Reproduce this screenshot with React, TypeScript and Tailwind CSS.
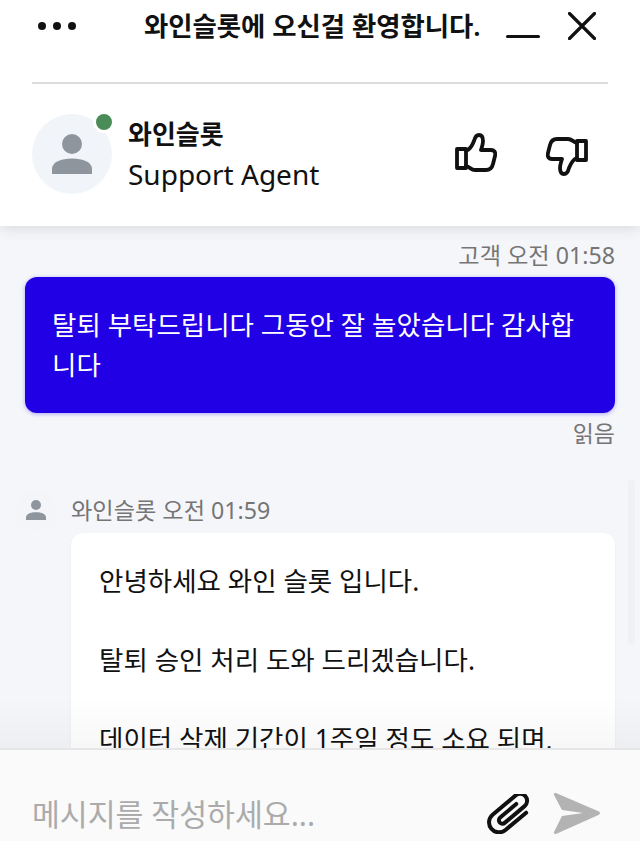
import React from "react";

function Person({ className }: { className: string }) {
  return (
    <svg viewBox="0 0 40 40" className={className} fill="#8e959c">
      <circle cx="20" cy="10" r="10" />
      <path d="M0 40V35C0 28 9 24.500 20 24.500S40 28 40 35V40Z" />
    </svg>
  );
}

function Thumb({ down }: { down?: boolean }) {
  return (
    <svg
      viewBox="0 0 42 40"
      className={down ? "w-[42px] h-[40px] rotate-180 mt-[3px]" : "w-[42px] h-[40px]"}
      fill="none"
      stroke="#111"
      strokeWidth="3.8"
      strokeLinejoin="round"
      strokeLinecap="round"
    >
      <path d="M2 16H11V35H2Z" />
      <path d="M11 18C14 17 17 13 19 8C20 4 21 2 24 2C27 2 28 5 28 8C28 11 27 14 26 17H36C39 17 41 19 40 23L38 31C37 35 35 37 31 37H20C16 37 15 34 11 33" />
    </svg>
  );
}

function Clip() {
  return (
    <svg viewBox="4 -6 44 40" className="w-[44px] h-[40px]" fill="none" stroke="#111" strokeWidth="4" strokeLinecap="round" strokeLinejoin="round">
      <path
        d="M38 11H17A3.500 3.500 0 0 0 17 18H43A7 7 0 0 0 43 4H13A10 10 0 0 0 13 24H40"
        transform="rotate(-40 26 14)"
      />
    </svg>
  );
}

function Send() {
  return (
    <svg viewBox="0 0 47 41" className="w-[47px] h-[41px]" fill="#b3b3b3">
      <path d="M1 2C0.500 0.500 2 -0.300 3.500 0.300L46 18.500C47.300 19.200 47.300 21 46 21.800L3.500 40.700C2 41.300 0.500 40.500 1 39L9 23L30 20L9 17Z" />
    </svg>
  );
}

export default function App() {
  return (
    <div
      className="relative flex flex-col h-[841px] w-[640px] overflow-hidden bg-[#f5f6fa] text-[#111]"
      style={{ fontFamily: '"Noto Sans", "Noto Sans CJK KR", sans-serif' }}
    >
      <header className="relative z-10 bg-white shadow-[0_2px_14px_rgba(0,0,0,0.12)] h-[226px] shrink-0 px-8">
        <div className="h-[84px] border-b-2 border-[#dcdcdc] flex items-start">
          <div className="flex gap-[7px] pt-[22px] w-[48px] pl-[6px]">
            <span className="w-[8px] h-[8px] rounded-full bg-[#111]" />
            <span className="w-[8px] h-[8px] rounded-full bg-[#111]" />
            <span className="w-[8px] h-[8px] rounded-full bg-[#111]" />
          </div>
          <div className="text-[26.400px] leading-[52px] font-semibold whitespace-nowrap ml-[64px]">와인슬롯에 오신걸 환영합니다.</div>
          <div className="flex items-start ml-auto mr-[12px]">
            <span className="w-[34px] h-[3px] mt-[35px] rounded-[2px] bg-[#111]" />
            <svg viewBox="0 0 28 28" className="w-[28px] h-[28px] mt-[12px] ml-[28px]" stroke="#111" strokeWidth="3.200" strokeLinecap="round">
              <path d="M1.500 1.500L26.500 26.500M26.500 1.500L1.500 26.500" />
            </svg>
          </div>
        </div>
        <div className="flex items-center mt-[30px]">
          <div className="relative w-[80px] h-[80px] rounded-full bg-[#f1f5f9] flex items-center justify-center shrink-0">
            <Person className="w-[40px] h-[40px]" />
            <span className="absolute right-[-3px] top-[-3px] w-[22px] h-[22px] rounded-full bg-[#4a8c57] border-[3px] border-white" />
          </div>
          <div className="ml-[16px] flex flex-col -mt-[1px]">
            <div className="text-[26px] leading-[40px] font-bold">와인슬롯</div>
            <div className="text-[28px] leading-[40px]">Support Agent</div>
          </div>
          <div className="ml-auto flex gap-[49px] pr-[20px]">
            <Thumb />
            <Thumb down />
          </div>
        </div>
      </header>

      <main className="relative flex-1 min-h-0 overflow-hidden px-[25px]">
        <div className="text-right text-[23.200px] leading-[30px] text-[#757575] mt-[14px]">고객 오전 01:58</div>
        <div className="mt-[7px] rounded-[12px] bg-[#2200e6] text-white text-[26.500px] leading-[40px] pl-[27px] pr-[36px] pt-[28px] pb-[28px] shadow-[0_1px_4px_rgba(34,0,230,0.35)]">
          탈퇴 부탁드립니다 그동안 잘 놀았습니다 감사합니다
        </div>
        <div className="text-right text-[23px] leading-[30px] text-[#757575] mt-[5px]">읽음</div>
        <div className="relative flex items-center mt-[47px] h-[30px]">
          <span className="absolute left-[-9px] top-[-5px] w-[40px] h-[40px] rounded-full bg-[#f3f5f9]" />
          <Person className="relative w-[20px] h-[20px] ml-[1px]" />
          <div className="ml-[25px] text-[23.200px] leading-[30px] text-[#757575]">와인슬롯 오전 01:59</div>
        </div>
        <div className="ml-[46px] mt-[8px] rounded-[12px] bg-white pl-[28px] pr-[20px] pt-[28px] text-[26.500px] leading-[40px] shadow-[0_1px_3px_rgba(0,0,0,0.05)]">
          <p className="mb-[39px]">안녕하세요 와인 슬롯 입니다.</p>
          <p className="mb-[39px]">탈퇴 승인 처리 도와 드리겠습니다.</p>
          <p>데이터 삭제 기간이 1주일 정도 소요 되며,</p>
        </div>
        <div className="absolute right-[5px] top-[254px] w-[7px] h-[165px] rounded-full bg-[#f1f1f3]" />
        <div className="absolute inset-x-0 bottom-0 h-[50px] bg-gradient-to-b from-[rgba(0,0,0,0)] to-[rgba(0,0,0,0.03)]" />
      </main>

      <footer className="relative z-10 h-[93px] shrink-0 bg-[#fafafa] border-t-2 border-[#e6e6e6] flex items-end pl-[32px] pb-[7px]">
        <div className="text-[30.300px] leading-[40px] text-[#ababab] flex-1 mb-[-1px]">메시지를 작성하세요...</div>
        <div className="flex items-center pr-[40px] gap-[22px]">
          <Clip />
          <Send />
        </div>
      </footer>
    </div>
  );
}
